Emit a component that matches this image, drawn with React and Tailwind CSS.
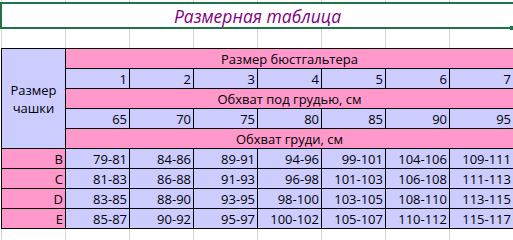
import React from "react";

const lav = "bg-[#ccccff]";
const pink = "bg-[#ff99cc]";

const sizes = ["1", "2", "3", "4", "5", "6", "7"];
const underBust = ["65", "70", "75", "80", "85", "90", "95"];
const rows = [
  ["B", "79-81", "84-86", "89-91", "94-96", "99-101", "104-106", "109-111"],
  ["C", "81-83", "86-88", "91-93", "96-98", "101-103", "106-108", "111-113"],
  ["D", "83-85", "88-90", "93-95", "98-100", "103-105", "108-110", "113-115"],
  ["E", "85-87", "90-92", "95-97", "100-102", "105-107", "110-112", "115-117"],
];

function GridStrip({ className }) {
  return (
    <div className={`ml-[1px] flex ${className}`}>
      {Array.from({ length: 9 }).map((_, i) => (
        <div key={i} className="w-[64px] shrink-0 border-l border-[#d4d4d4]" />
      ))}
    </div>
  );
}

function Num({ children, bg = lav }) {
  return <div className={`${bg} pr-[2px] pt-px text-right`}>{children}</div>;
}

function Band({ children }) {
  return <div className={`${pink} col-span-7 pt-px text-center`}>{children}</div>;
}

export default function App() {
  return (
    <div
      className="flex h-[240px] w-[513px] flex-col overflow-hidden bg-white text-[13px] leading-[19px] text-black"
      style={{ fontFamily: '"Open Sans", sans-serif' }}
    >
      <GridStrip className="h-[2px] shrink-0" />

      {/* title */}
      <div className="relative h-[27px] w-[513px] shrink-0 border-y-2 border-l-2 border-[#217346] bg-white">
        <div className="pt-[1px] text-center text-[17.5px] italic leading-[22px] text-[#800080]">
          Размерная таблица
        </div>
        <div className="absolute -bottom-[3px] right-0 h-[4px] w-[3px] bg-[#217346]" />
      </div>

      <GridStrip className="h-[19px] shrink-0" />

      {/* size table */}
      <div className="ml-[1px] grid w-max shrink-0 grid-cols-[repeat(8,63px)] grid-rows-[repeat(9,19px)] gap-px bg-black p-px">
        <div className={`${lav} row-span-5 flex flex-col items-center justify-center leading-[18px]`}>
          <span>Размер</span>
          <span>чашки</span>
        </div>
        <Band>Размер бюстгальтера</Band>
        {sizes.map((s) => (
          <Num key={s}>{s}</Num>
        ))}
        <Band>Обхват под грудью, см</Band>
        {underBust.map((s) => (
          <Num key={s}>{s}</Num>
        ))}
        <Band>Обхват груди, см</Band>
        {rows.map((r) =>
          r.map((v, i) => (
            <Num key={r[0] + i} bg={i === 0 ? pink : lav}>
              {v}
            </Num>
          ))
        )}
      </div>

      <GridStrip className="flex-1" />
    </div>
  );
}
